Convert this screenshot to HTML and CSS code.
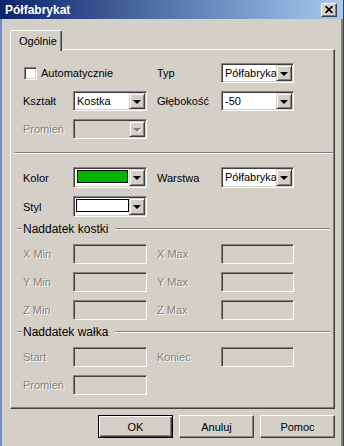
FILE: index.html
```html
<!DOCTYPE html>
<html lang="pl">
<head>
    <meta charset="UTF-8">
    <title>Półfabrykat</title>
    <link rel="stylesheet" href="styles.css">
</head>
<body>
<div class="window">
    <div class="titlebar">
        <span class="title">Półfabrykat</span>
        <span class="close-btn">
            <svg width="8" height="7" viewBox="0 0 8 7"><path d="M0.5 0l7 7M7.5 0l-7 7" stroke="#000" stroke-width="1.6"/></svg>
        </span>
    </div>

    <div class="client">
        <div class="tab-strip">
            <div class="tab">Ogólnie</div>
        </div>

        <div class="panel">
            <div class="grid grid-a">
                <label class="check-row"><span class="checkbox"></span><span>Automatycznie</span></label>
                <span class="lbl lbl-right">Typ</span>
                <div class="combo combo-right"><span class="value">Półfabryka</span><span class="drop"><i></i></span></div>

                <span class="lbl">Kształt</span>
                <div class="combo"><span class="value">Kostka</span><span class="drop"><i></i></span></div>
                <span class="lbl lbl-right">Głębokość</span>
                <div class="combo combo-right"><span class="value">-50</span><span class="drop"><i></i></span></div>

                <span class="lbl disabled">Promień</span>
                <div class="combo off"><span class="value"></span><span class="drop"><i></i></span></div>
            </div>

            <div class="sep"></div>

            <div class="grid grid-b">
                <span class="lbl">Kolor</span>
                <div class="combo combo-tall"><span class="value"><span class="swatch green"></span></span><span class="drop"><i></i></span></div>
                <span class="lbl lbl-right">Warstwa</span>
                <div class="combo combo-right combo-tall"><span class="value">Półfabryka</span><span class="drop"><i></i></span></div>

                <span class="lbl">Styl</span>
                <div class="combo combo-tall"><span class="value"><span class="swatch white"></span></span><span class="drop"><i></i></span></div>
            </div>

            <div class="group"><span>Naddatek kostki</span></div>

            <div class="grid grid-c">
                <span class="lbl disabled">X Min</span>
                <div class="edit"></div>
                <span class="lbl lbl-right disabled">X Max</span>
                <div class="edit edit-right"></div>

                <span class="lbl disabled">Y Min</span>
                <div class="edit"></div>
                <span class="lbl lbl-right disabled">Y Max</span>
                <div class="edit edit-right"></div>

                <span class="lbl disabled">Z Min</span>
                <div class="edit"></div>
                <span class="lbl lbl-right disabled">Z Max</span>
                <div class="edit edit-right"></div>
            </div>

            <div class="group"><span>Naddatek wałka</span></div>

            <div class="grid grid-c">
                <span class="lbl disabled">Start</span>
                <div class="edit"></div>
                <span class="lbl lbl-right disabled">Koniec</span>
                <div class="edit edit-right"></div>

                <span class="lbl disabled">Promień</span>
                <div class="edit"></div>
            </div>
        </div>

        <div class="buttons">
            <button class="btn default">OK</button>
            <button class="btn">Anuluj</button>
            <button class="btn">Pomoc</button>
        </div>
    </div>
</div>
</body>
</html>
```

FILE: styles.css
```css
body {
    margin: 0;
    background: #d4d0c8;
    font-family: "Liberation Sans", Arial, sans-serif;
    font-size: 11px;
    color: #000;
}
.window {
    width: 344px;
    height: 446px;
    background: #d4d0c8;
    box-sizing: border-box;
    border-right: 1px solid #404040;
    box-shadow: inset -2px 0 #808080;
    overflow: hidden;
}
.titlebar {
    height: 19px;
    display: flex;
    align-items: center;
    justify-content: space-between;
    padding: 0 6px 0 5px;
    background: linear-gradient(to right, #0a246a, #a6caf0);
}
.title {
    color: #fff;
    font-weight: bold;
    font-size: 12px;
}
.close-btn {
    width: 16px;
    height: 14px;
    box-sizing: border-box;
    display: flex;
    align-items: center;
    justify-content: center;
    background: #d4d0c8;
    border: 1px solid;
    border-color: #fff #404040 #404040 #fff;
    box-shadow: inset -1px -1px #808080;
}
.client {
    border-left: 2px solid #6d8fd0;
    padding: 11px 0 0 8px;
    height: 427px;
    box-sizing: border-box;
}

/* tab */
.tab-strip {
    display: flex;
    height: 19px;
}
.tab {
    width: 52px;
    box-sizing: border-box;
    border: 1px solid;
    border-bottom: none;
    border-color: #fff #404040 transparent #fff;
    box-shadow: inset -1px 0 #808080;
    border-radius: 2px 2px 0 0;
    padding: 4px 0 0 8px;
    position: relative;
    z-index: 1;
    background: #d4d0c8;
    height: 21px;
}
.panel {
    width: 325px;
    height: 360px;
    box-sizing: border-box;
    border: 1px solid;
    border-color: #fff #404040 #404040 #fff;
    box-shadow: inset -1px -1px #808080;
    padding: 13px 0 0 12px;
}

/* rows */
.grid {
    display: grid;
    grid-template-columns: 50px 84px 64px 72px;
    align-items: center;
}
.grid-a { grid-auto-rows: 20px; row-gap: 8px; }
.grid-b { grid-auto-rows: 21px; row-gap: 8px; margin-top: 13px; }
.grid-c { grid-auto-rows: 20px; row-gap: 8px; margin-top: 9px; }

.lbl { white-space: nowrap; }
.disabled {
    color: #808080;
    text-shadow: 1px 1px #fff;
}
.check-row {
    grid-column: 1 / 3;
    display: flex;
    align-items: center;
    gap: 4px;
    padding-left: 1px;
}
.checkbox {
    width: 13px;
    height: 13px;
    box-sizing: border-box;
    background: #fff;
    border: 1px solid;
    border-color: #808080 #fff #fff #808080;
    box-shadow: inset 1px 1px #404040, inset -1px -1px #d4d0c8;
}

/* combo boxes */
.combo, .edit {
    width: 74px;
    height: 20px;
    box-sizing: border-box;
    border: 1px solid;
    border-color: #808080 #fff #fff #808080;
    box-shadow: inset 1px 1px #404040, inset -1px -1px #d4d0c8;
    padding: 1px;
    background: #fff;
}
.combo {
    display: flex;
}
.combo-right, .edit-right { width: 73px; }
.combo-tall { height: 21px; }
.combo .value {
    flex: 1;
    overflow: hidden;
    white-space: nowrap;
    padding-left: 2px;
    line-height: 16px;
    font-size: 11px;
}
.combo .drop {
    width: 16px;
    flex-shrink: 0;
    box-sizing: border-box;
    background: #d4d0c8;
    border: 1px solid;
    border-color: #d4d0c8 #404040 #404040 #d4d0c8;
    box-shadow: inset 1px 1px #fff, inset -1px -1px #808080;
    display: flex;
    align-items: center;
    justify-content: center;
}
.combo .drop i {
    width: 0;
    height: 0;
    border-left: 4px solid transparent;
    border-right: 4px solid transparent;
    border-top: 4px solid #000;
    margin-top: 1px;
}
.combo.off .value { background: #d4d0c8; }
.combo.off .drop i {
    border-top-color: #808080;
    filter: drop-shadow(1px 1px 0 #fff);
}
.edit { background: #d4d0c8; }

.swatch {
    display: block;
    height: 13px;
    margin: 1px 0 0 -1px;
    box-sizing: border-box;
    border: 1px solid #000;
}
.swatch.green { background: #00b400; width: 51px; margin-left: 0; }
.swatch.white { background: #fff; width: 53px; }

/* separators */
.sep {
    width: 318px;
    margin: 13px 0 0 -8px;
    border-top: 1px solid #808080;
    border-bottom: 1px solid #fff;
}
.group {
    display: flex;
    align-items: center;
    width: 313px;
    margin: 5px 0 0 -6px;
    height: 13px;
}
.group::before, .group::after {
    content: "";
    border-top: 1px solid #808080;
    border-bottom: 1px solid #fff;
}
.group::before { width: 5px; margin-right: 1px; }
.group::after { flex: 1; margin-left: 7px; }
.group span { font-size: 12px; }

/* buttons */
.buttons {
    width: 325px;
    display: flex;
    justify-content: flex-end;
    gap: 6px;
    margin-top: 6px;
}
.btn {
    width: 75px;
    height: 23px;
    font-family: "Liberation Sans", Arial, sans-serif;
    font-size: 11px;
    color: #000;
    background: #d4d0c8;
    border: 1px solid;
    border-color: #fff #404040 #404040 #fff;
    box-shadow: inset -1px -1px #808080;
    padding: 0;
}
.btn.default {
    border-color: #000;
    box-shadow: inset 1px 1px #fff, inset -1px -1px #404040, inset -2px -2px #808080;
}
```
